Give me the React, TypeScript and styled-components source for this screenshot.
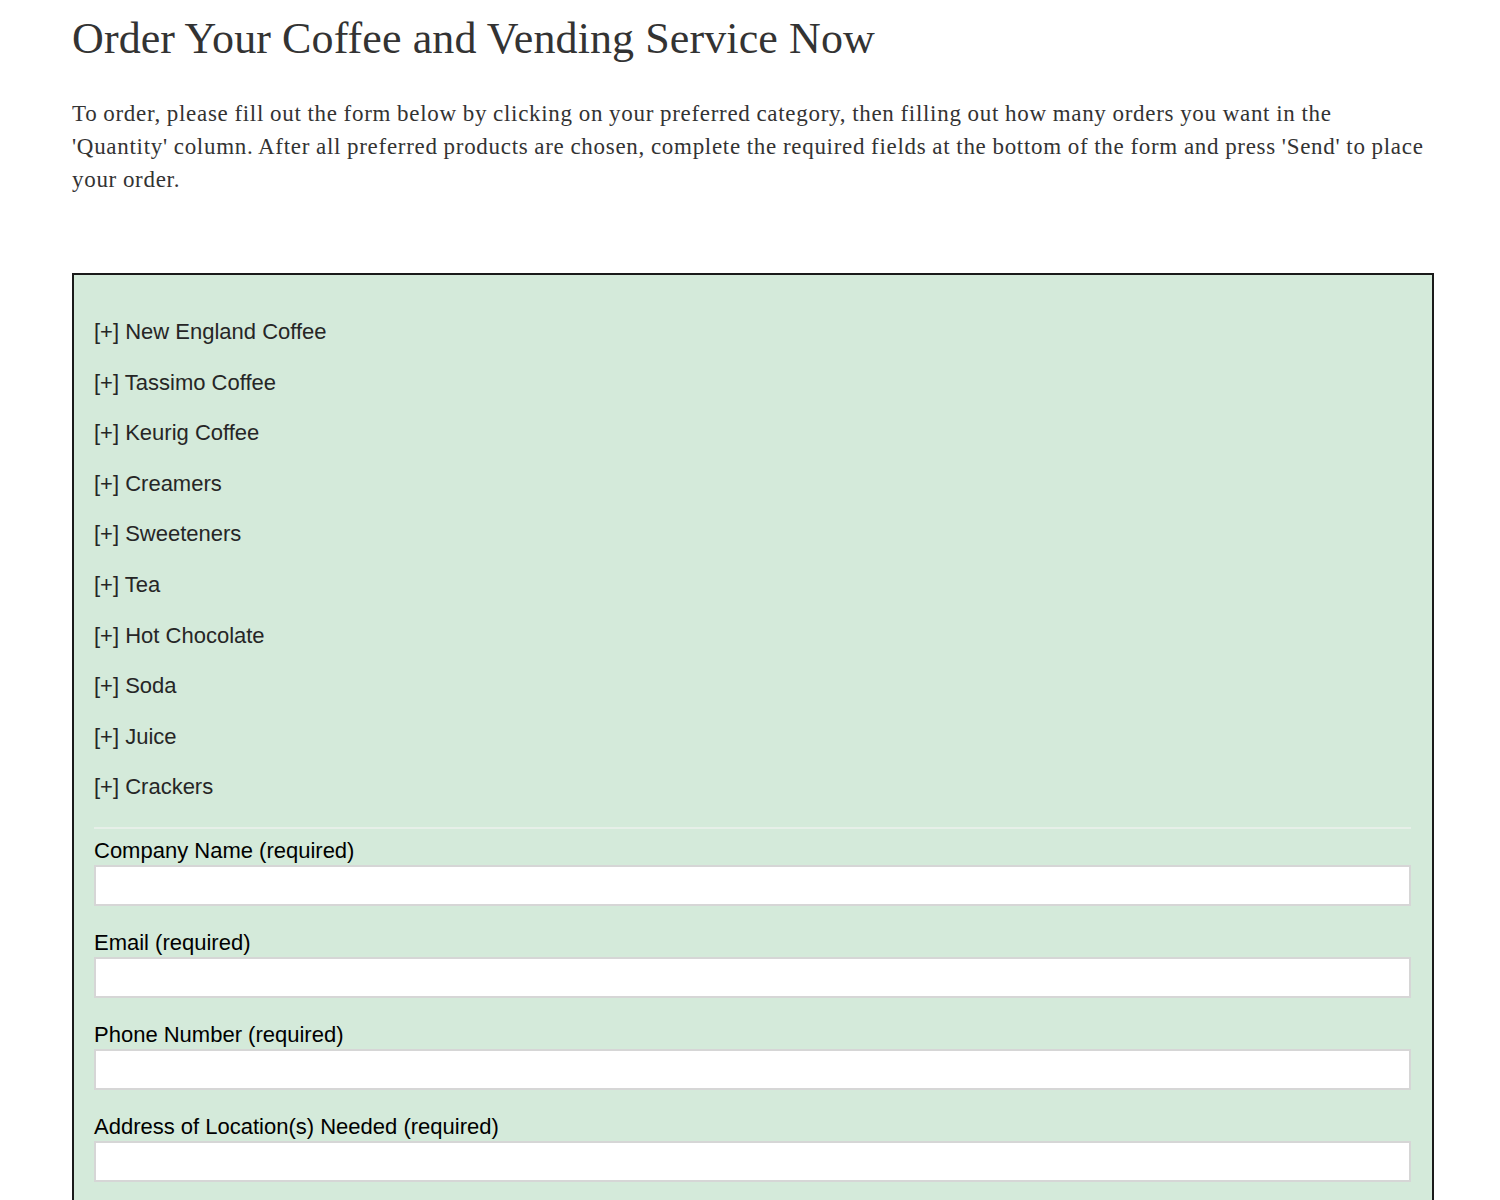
import React from "react";
import styled, { createGlobalStyle } from "styled-components";

const categories = [
  "New England Coffee",
  "Tassimo Coffee",
  "Keurig Coffee",
  "Creamers",
  "Sweeteners",
  "Tea",
  "Hot Chocolate",
  "Soda",
  "Juice",
  "Crackers",
];

const fields = [
  "Company Name (required)",
  "Email (required)",
  "Phone Number (required)",
  "Address of Location(s) Needed (required)",
];

const App = () => {
  return (
    <>
      <GlobalStyle />
      <Page>
        <Title>Order Your Coffee and Vending Service Now</Title>
        <Intro>
          To order, please fill out the form below by clicking on your preferred
          category, then filling out how many orders you want in the
          <br />
          'Quantity' column. After all preferred products are chosen, complete
          the required fields at the bottom of the form and press 'Send' to
          place
          <br />
          your order.
        </Intro>
        <FormBox>
          <CategoryList>
            {categories.map((c) => (
              <Category key={c}>[+] {c}</Category>
            ))}
          </CategoryList>
          <Divider />
          {fields.map((f) => (
            <Field key={f}>
              <Label>{f}</Label>
              <Input type="text" />
            </Field>
          ))}
        </FormBox>
      </Page>
    </>
  );
};

const GlobalStyle = createGlobalStyle`
  body {
    margin: 0;
    background: #fff;
  }
`;
const Page = styled.div`
  width: 1362px;
  margin-left: 72px;
`;
const Title = styled.h1`
  font-family: "Liberation Serif", serif;
  font-weight: normal;
  font-size: 44px;
  letter-spacing: 0.1px;
  color: #333;
  margin: 0;
  padding-top: 12px;
  line-height: 54px;
`;
const Intro = styled.p`
  font-family: "Liberation Serif", serif;
  font-size: 23px;
  letter-spacing: 0.7px;
  word-spacing: -0.5px;
  line-height: 33px;
  color: #333;
  margin: 31px 0 0;
`;
const FormBox = styled.div`
  margin-top: 77px;
  border: 2px solid #1a1a1a;
  background: #d4eada;
  padding: 32px 21px 0 20px;
  min-height: 960px;
`;
const CategoryList = styled.div`
  display: flex;
  flex-direction: column;
`;
const Category = styled.div`
  font-family: "Liberation Sans", Arial, sans-serif;
  font-size: 22px;
  color: #262626;
  line-height: 24px;
  padding: 13px 0;
  margin-bottom: 0.6px;
`;
const Divider = styled.hr`
  border: none;
  border-top: 2px solid #e6efe8;
  margin: 14px 0 9px;
`;
const Field = styled.div`
  display: flex;
  flex-direction: column;
  margin-bottom: 24px;
`;
const Label = styled.label`
  font-family: "Liberation Sans", Arial, sans-serif;
  font-size: 22px;
  color: #000;
  line-height: 26px;
  margin-bottom: 1px;
`;
const Input = styled.input`
  box-sizing: border-box;
  height: 41px;
  width: 100%;
  background: #fff;
  border: 2px solid #d6d6d6;
  outline: none;
`;

export default App;
